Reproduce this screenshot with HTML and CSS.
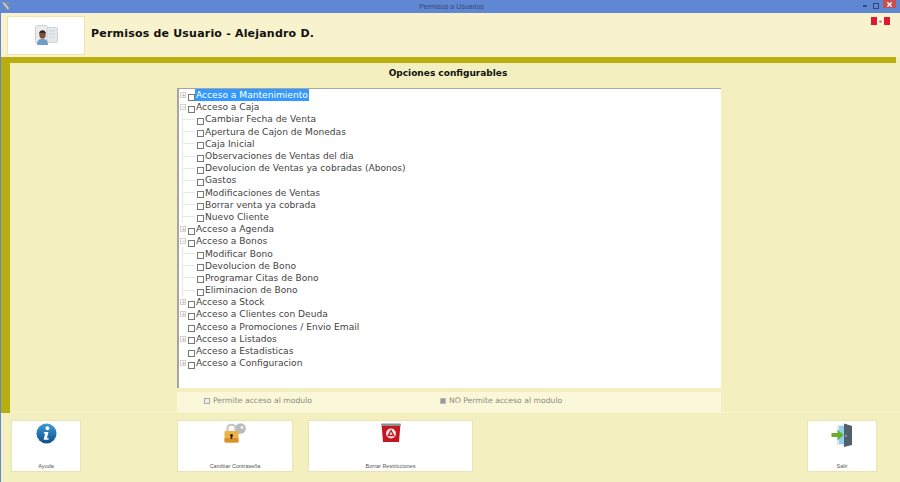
FILE: index.html
```html
<!DOCTYPE html>
<html lang="en">

<head>
    <meta charset="UTF-8" />
    <title>Permisos a Usuarios</title>
    <link rel="stylesheet" href="styles.css">
</head>

<body>
    <div class="title-bar">
        <svg class="app-icon" width="10" height="10" viewBox="0 0 10 10">
            <path d="M1 1 L4 2 L8 7 L7 9 L3 4 Z" fill="#d8c9a0" />
            <path d="M5 1 L8 1 L7 4 Z" fill="#9a8f80" />
        </svg>
        <span class="title-text">Permisos a Usuarios</span>
        <div class="win-controls">
            <span class="win-min"></span>
            <span class="win-max"></span>
            <span class="win-close">
                <svg width="5" height="5" viewBox="0 0 6 6">
                    <path d="M0.5 0.5 L5.5 5.5 M5.5 0.5 L0.5 5.5" stroke="#fff" stroke-width="1.6" />
                </svg>
            </span>
        </div>
    </div>

    <div class="window">
        <header class="header">
            <div class="header-btn">
                <svg width="23" height="21" viewBox="0 0 23 21">
                    <rect x="0.5" y="0.5" width="12" height="18" rx="2" fill="#ececea" stroke="#cfcfcf" />
                    <rect x="12" y="2.5" width="10.5" height="15" rx="1.5" fill="#e4e9ec" stroke="#cfd2d2" />
                    <path d="M14 6h6M14 9h6M14 12h6" stroke="#cdd6dc" />
                    <path d="M2 20 C2 15 4 14 7.5 14 C11 14 13 15 13 20 Z" fill="#6f9fc9" />
                    <ellipse cx="7.5" cy="9.5" rx="3.2" ry="4.2" fill="#7a5238" />
                    <path d="M4.2 8.5 C4.2 4.5 10.8 4.5 10.8 8.5 C9 7.5 6 7.5 4.2 8.5 Z" fill="#2e2a26" />
                </svg>
            </div>
            <h1>Permisos de Usuario - Alejandro D.</h1>
            <div class="flags">
                <span class="flag"></span>
                <span class="flag-mid"><span class="flag-dot"></span></span>
                <span class="flag"></span>
            </div>
        </header>

        <div class="olive-top"></div>

        <div class="main">
            <div class="olive-left"></div>
            <section class="content">
                <h2>Opciones configurables</h2>
                <div class="tree" id="tree"></div>
                <div class="legend">
                    <label class="legend-item legend-yes"><span class="mini-check"></span>Permite acceso al modulo</label>
                    <label class="legend-item legend-no"><span class="mini-check on"></span>NO Permite acceso al modulo</label>
                </div>
            </section>
        </div>

        <footer class="footer">
            <button class="btn btn-help">
                <svg width="21" height="21" viewBox="0 0 22 22">
                    <defs>
                        <linearGradient id="blue" x1="0" y1="0" x2="0" y2="1">
                            <stop offset="0" stop-color="#3f9bd8" />
                            <stop offset="1" stop-color="#0b4f8e" />
                        </linearGradient>
                    </defs>
                    <circle cx="11" cy="11" r="10.5" fill="url(#blue)" />
                    <circle cx="12" cy="5.5" r="2" fill="#fff" />
                    <path d="M8.5 9.5 H13 L11.5 16 H13.5 L13 17.5 H8 L9.5 11 H8.2 Z" fill="#fff" />
                </svg>
                <span class="btn-label">Ayuda</span>
            </button>
            <button class="btn btn-pass">
                <svg width="22" height="20" viewBox="0 0 22 20">
                    <circle cx="16.5" cy="5.5" r="5.3" fill="#b9bcbf" />
                    <circle cx="18" cy="4.5" r="1.5" fill="#f2f2f2" />
                    <path d="M13 8 L9 13 L11 15 L15.5 10 Z" fill="#a9acaf" />
                    <path d="M3.5 9 V5.5 C3.5 0.5 11.5 0.5 11.5 5.5 V9" fill="none" stroke="#c4c4c0" stroke-width="2" />
                    <rect x="0.5" y="8" width="14" height="11.5" rx="1" fill="#eeb245" />
                    <rect x="0.5" y="15" width="14" height="4.5" rx="1" fill="#d98f2c" />
                    <circle cx="7.5" cy="12.5" r="1.4" fill="#222" />
                    <rect x="6.8" y="12.5" width="1.4" height="3.5" fill="#222" />
                </svg>
                <span class="btn-label">Cambiar Contraseña</span>
            </button>
            <button class="btn btn-clear">
                <svg width="20" height="20" viewBox="0 0 20 20">
                    <path d="M0.5 1 H19.5 L18 19 H2 Z" fill="#c3171f" />
                    <rect x="0.5" y="0.5" width="19" height="2.5" fill="#8c8d8c" />
                    <circle cx="10" cy="10.5" r="5" fill="#f8e6e6" />
                    <path d="M10 7.5 L12.8 12.5 H7.2 Z" fill="none" stroke="#c3171f" stroke-width="1.3" />
                </svg>
                <span class="btn-label">Borrar Restricciones</span>
            </button>
            <button class="btn btn-exit">
                <svg width="22" height="24" viewBox="0 0 22 24">
                    <rect x="6" y="2" width="14" height="20" fill="#dfeaf2" />
                    <rect x="8" y="3" width="5" height="18" fill="#8fd0f2" />
                    <path d="M13 0.5 L21 3 V22 L13 24 Z" fill="#52606c" />
                    <circle cx="15" cy="13" r="0.8" fill="#d5d5d5" />
                    <path d="M0.5 10 H6.5 V6.5 L12.5 12 L6.5 17.5 V14 H0.5 Z" fill="#69ad2b" />
                </svg>
                <span class="btn-label">Salir</span>
            </button>
        </footer>
    </div>

    <script>
        const nodes = [
            { text: "Acceso a Mantenimiento", box: "plus", selected: true },
            { text: "Acceso a Caja", box: "minus" },
            { text: "Cambiar Fecha de Venta", child: true },
            { text: "Apertura de Cajon de Monedas", child: true },
            { text: "Caja Inicial", child: true },
            { text: "Observaciones de Ventas del dia", child: true },
            { text: "Devolucion de Ventas ya cobradas (Abonos)", child: true },
            { text: "Gastos", child: true },
            { text: "Modificaciones de Ventas", child: true },
            { text: "Borrar venta ya cobrada", child: true },
            { text: "Nuevo Cliente", child: true },
            { text: "Acceso a Agenda", box: "plus" },
            { text: "Acceso a Bonos", box: "minus" },
            { text: "Modificar Bono", child: true },
            { text: "Devolucion de Bono", child: true },
            { text: "Programar Citas de Bono", child: true },
            { text: "Eliminacion de Bono", child: true },
            { text: "Acceso a Stock", box: "plus" },
            { text: "Acceso a Clientes con Deuda", box: "plus" },
            { text: "Acceso a Promociones / Envio Email" },
            { text: "Acceso a Listados", box: "plus" },
            { text: "Acceso a Estadisticas" },
            { text: "Acceso a Configuracion", box: "plus" }
        ];

        const tree = document.getElementById("tree");

        nodes.forEach(node => {
            const row = document.createElement("div");
            row.className = node.child ? "row child" : "row";

            let lead = `<span class="expander none"></span>`;
            if (node.child) {
                lead = `<span class="branch"></span>`;
            } else if (node.box) {
                lead = `<span class="expander">${node.box === "plus" ? "+" : "−"}</span>`;
            }
            const label = `<span class="${node.selected ? "label selected" : "label"}">${node.text}</span>`;

            row.innerHTML = `${lead}<span class="check"></span>${label}`;
            tree.appendChild(row);
        });
    </script>
</body>

</html>
```

FILE: styles.css
```css
:root {
    --olive: #b9ae10;
    --cream: #f4efbf;
    --cream-light: #f8f3cd;
    --blue: #5f87d3;
    --btn-border: #e9e4b0;
}

* {
    box-sizing: border-box;
}

body {
    margin: 0;
    width: 900px;
    height: 482px;
    overflow: hidden;
    background-color: var(--blue);
    font-family: "DejaVu Sans", sans-serif;
}

.title-bar {
    position: relative;
    height: 13px;
    display: flex;
    align-items: center;
    justify-content: center;
}

.app-icon {
    position: absolute;
    left: 1px;
    top: 1px;
}

.title-text {
    margin-left: 3px;
    font-family: "Liberation Sans", sans-serif;
    font-size: 7px;
    color: #3a4a6e;
}

.win-controls {
    position: absolute;
    top: 0;
    right: 4px;
    display: flex;
    align-items: flex-start;
}

.win-min {
    width: 4px;
    height: 2px;
    margin: 5px 6px 0 0;
    background-color: #39496e;
}

.win-max {
    width: 6px;
    height: 6px;
    margin: 3px 4px 0 0;
    border: 1px solid #39496e;
}

.win-close {
    width: 13px;
    height: 8px;
    background-color: #c75050;
    display: flex;
    align-items: center;
    justify-content: center;
}

.window {
    margin-left: 1px;
    height: 469px;
    background-color: var(--cream);
    display: flex;
    flex-direction: column;
}

.header {
    position: relative;
    height: 44px;
    padding: 3px 6px 0;
    background-color: var(--cream-light);
    display: flex;
    align-items: flex-start;
}

.header-btn {
    width: 78px;
    height: 39px;
    background-color: #fff;
    border: 1px solid var(--btn-border);
    display: flex;
    align-items: center;
    justify-content: center;
}

h1 {
    margin: 11px 0 0 6px;
    font-size: 11px;
    font-weight: bold;
    letter-spacing: 0.2px;
    color: #111;
}

.flags {
    position: absolute;
    top: 4px;
    right: 10px;
    display: flex;
}

.flag {
    width: 6px;
    height: 8px;
    background-color: #e0182d;
}

.flag-mid {
    width: 7px;
    height: 8px;
    background-color: #fdf6ea;
    display: flex;
    align-items: center;
    justify-content: center;
}

.flag-dot {
    width: 3px;
    height: 3px;
    border-radius: 50%;
    background-color: #d99a5a;
}

.olive-top {
    height: 6px;
    margin-right: 4px;
    background-color: var(--olive);
}

.main {
    flex: 1;
    display: flex;
}

.olive-left {
    width: 8.5px;
    background-color: var(--olive);
}

.content {
    flex: 1;
    padding: 0 0 0 167.5px;
    border-bottom: 1px solid #f8f3cd;
}

h2 {
    width: 542px;
    margin: 0;
    height: 25px;
    padding-top: 5px;
    text-align: center;
    font-size: 9px;
    font-weight: bold;
    color: #111;
}

.tree {
    width: 544px;
    height: 300px;
    background-color: #fff;
    border-top: 1px solid #a5a5a5;
    border-left: 2px solid #a5a5a5;
    overflow: hidden;
}

.row {
    height: 12.2px;
    display: flex;
    align-items: center;
    white-space: nowrap;
    font-size: 9.1px;
    color: #444;
}

.expander {
    width: 6px;
    height: 6px;
    margin-left: 1px;
    border: 1px solid #d2d2d2;
    font-size: 6px;
    line-height: 4px;
    text-align: center;
    color: #aaa;
}

.expander.none {
    border-color: transparent;
}

.branch {
    width: 15px;
    height: 100%;
    margin-left: 3px;
    border-left: 1px solid #e8e8e8;
    background: linear-gradient(#e8e8e8, #e8e8e8) no-repeat left center / 12px 1px;
}

.check {
    width: 7px;
    height: 7px;
    margin: 4px 0 0 2px;
    border: 1px solid #777;
    background-color: #fff;
}

.row.child .check {
    margin-left: 0;
}

.label {
    padding: 0 1px;
}

.label.selected {
    line-height: 12px;
    background-color: #3399ff;
    color: #fff;
}

.legend {
    width: 544px;
    height: 20px;
    margin-top: 4px;
    padding-bottom: 3px;
    background-color: #fbf8d9;
    display: flex;
    align-items: center;
    font-size: 7.7px;
    color: #8a8a80;
}

.legend-item {
    display: flex;
    align-items: center;
}

.legend-yes {
    margin-left: 27px;
    width: 236px;
}

.mini-check {
    width: 6px;
    height: 6px;
    margin-right: 3px;
    border: 1px solid #aaa;
    background-color: #eee;
}

.mini-check.on {
    background-color: #999;
    border-color: #bbb;
}

.footer {
    height: 69px;
    padding: 7px 23px 0 10px;
    display: flex;
    align-items: flex-start;
}

.btn {
    height: 52px;
    padding: 2px 0 0;
    background-color: #fff;
    border: 1px solid var(--btn-border);
    display: flex;
    flex-direction: column;
    align-items: center;
    justify-content: space-between;
    font-family: "Liberation Sans", sans-serif;
}

.btn-label {
    margin-bottom: 2px;
    font-size: 5.5px;
    color: #555;
}

.btn-help {
    width: 70px;
    margin-right: 96px;
}

.btn-pass {
    width: 116px;
    margin-right: 15px;
}

.btn-clear {
    width: 165px;
}

.btn-exit {
    width: 70px;
    margin-left: auto;
}
```
